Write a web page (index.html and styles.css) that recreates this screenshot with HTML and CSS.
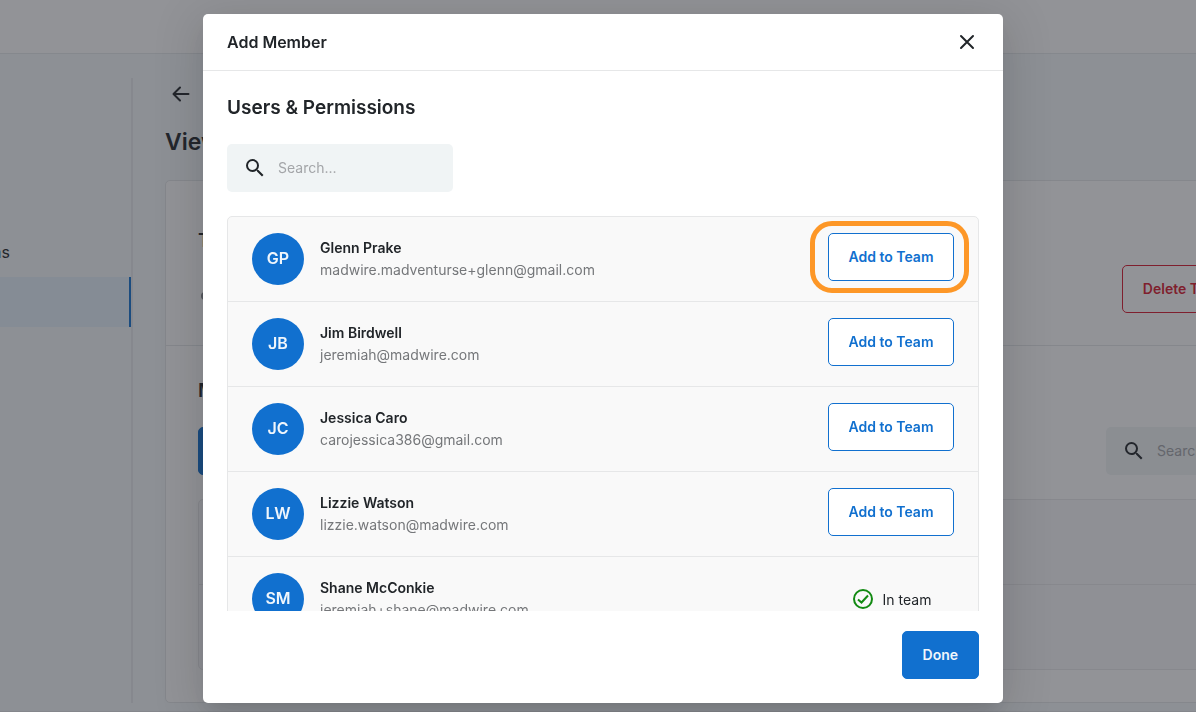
FILE: index.html
```html
<!DOCTYPE html>
<html lang="en">
<head>
    <meta charset="UTF-8">
    <meta name="viewport" content="width=device-width, initial-scale=1.0">
    <title>View Team - Add Member</title>
    <link rel="stylesheet" href="styles.css">
</head>
<body>
    <!-- Team page -->
    <div class="page" inert>
        <header class="topbar"></header>
        <div class="layout">
            <nav class="sidebar">
                <a class="nav-item" href="#">Permissions</a>
                <a class="nav-item active" href="#">Teams</a>
            </nav>
            <main class="content">
                <button class="icon-button back" aria-label="Back">
                    <svg class="icon" viewBox="0 0 24 24"><path class="line" d="M19.500 12H5M11 5.500L4.500 12l6.500 6.500"/></svg>
                </button>
                <h1>View Team</h1>
                <div class="card">
                    <section class="team-info">
                        <div>
                            <h2>Team</h2>
                            <svg class="icon team-icon" viewBox="0 0 24 24"><circle cx="7" cy="9" r="4"/><circle cx="17" cy="9" r="4"/></svg>
                        </div>
                        <button class="button danger">Delete Team</button>
                    </section>
                    <section class="members">
                        <h2>Members</h2>
                        <div class="toolbar">
                            <button class="button primary">Add Member</button>
                            <label class="search">
                                <svg class="icon" viewBox="0 0 24 24"><path d="M15.500 14h-.79l-.28-.27A6.470 6.470 0 0 0 16 9.500 6.500 6.500 0 1 0 9.500 16c1.610 0 3.090-.59 4.230-1.570l.27.28v.79l5 4.990L20.490 19l-4.990-5zm-6 0C7.010 14 5 11.990 5 9.500S7.010 5 9.500 5 14 7.010 14 9.500 11.990 14 9.500 14z"/></svg>
                                <input type="text" placeholder="Search..." aria-label="Search members">
                            </label>
                        </div>
                        <div class="member-rows">
                            <div class="member-row"></div>
                            <div class="member-row"></div>
                        </div>
                    </section>
                </div>
            </main>
        </div>
        <footer class="page-footer"></footer>
    </div>

    <!-- Add member dialog -->
    <div class="overlay">
        <div class="modal" role="dialog" aria-modal="true" aria-labelledby="modalTitle">
            <div class="modal-header">
                <h2 id="modalTitle">Add Member</h2>
                <button class="icon-button" aria-label="Close">
                    <svg class="icon" viewBox="0 0 24 24"><path class="line" d="M6 6l12 12M18 6L6 18"/></svg>
                </button>
            </div>
            <div class="modal-body">
                <h3>Users &amp; Permissions</h3>
                <label class="search">
                    <svg class="icon" viewBox="0 0 24 24"><path d="M15.500 14h-.79l-.28-.27A6.470 6.470 0 0 0 16 9.500 6.500 6.500 0 1 0 9.500 16c1.610 0 3.090-.59 4.230-1.570l.27.28v.79l5 4.990L20.490 19l-4.990-5zm-6 0C7.010 14 5 11.990 5 9.500S7.010 5 9.500 5 14 7.010 14 9.500 11.990 14 9.500 14z"/></svg>
                    <input type="text" placeholder="Search..." aria-label="Search users">
                </label>
                <ul class="user-list">
                    <li class="user">
                        <span class="avatar">GP</span>
                        <div class="user-text">
                            <div class="name">Glenn Prake</div>
                            <div class="email">madwire.madventurse+glenn@gmail.com</div>
                        </div>
                        <div class="action highlight"><button class="button outline">Add to Team</button></div>
                    </li>
                    <li class="user">
                        <span class="avatar">JB</span>
                        <div class="user-text">
                            <div class="name">Jim Birdwell</div>
                            <div class="email">jeremiah@madwire.com</div>
                        </div>
                        <div class="action"><button class="button outline">Add to Team</button></div>
                    </li>
                    <li class="user">
                        <span class="avatar">JC</span>
                        <div class="user-text">
                            <div class="name">Jessica Caro</div>
                            <div class="email">carojessica386@gmail.com</div>
                        </div>
                        <div class="action"><button class="button outline">Add to Team</button></div>
                    </li>
                    <li class="user">
                        <span class="avatar">LW</span>
                        <div class="user-text">
                            <div class="name">Lizzie Watson</div>
                            <div class="email">lizzie.watson@madwire.com</div>
                        </div>
                        <div class="action"><button class="button outline">Add to Team</button></div>
                    </li>
                    <li class="user">
                        <span class="avatar">SM</span>
                        <div class="user-text">
                            <div class="name">Shane McConkie</div>
                            <div class="email">jeremiah+shane@madwire.com</div>
                        </div>
                        <div class="in-team">
                            <svg class="icon check" viewBox="0 0 24 24"><circle cx="12" cy="12" r="9"/><path d="M7 12.500l3.500 3 6.500-7"/></svg>
                            In team
                        </div>
                    </li>
                </ul>
            </div>
            <div class="modal-footer">
                <button class="button primary">Done</button>
            </div>
        </div>
    </div>
</body>
</html>
```
FILE: styles.css
```css
* {
    box-sizing: border-box;
}
body {
    margin: 0;
    height: 100vh;
    overflow: hidden;
    font-family: Inter, sans-serif;
    font-size: 14px;
    color: #212529;
    background-color: #f4f8fa;
}
h1, h2, h3 {
    margin: 0;
    font-weight: 600;
}
h1 {
    font-size: 23px;
    line-height: 32px;
}
h2 {
    font-size: 19px;
    line-height: 24px;
}
h3 {
    font-size: 19px;
    line-height: 26px;
    margin-bottom: 23px;
}

/* Shared controls */
.icon {
    display: block;
    flex: none;
    width: 24px;
    height: 24px;
    fill: #212529;
}
.icon .line {
    fill: none;
    stroke: #212529;
    stroke-width: 2;
    stroke-linecap: round;
    stroke-linejoin: round;
}
.icon-button {
    padding: 0;
    background: none;
    border: none;
    cursor: pointer;
}
.button {
    height: 48px;
    padding: 0 20px 2px;
    font-family: inherit;
    font-size: 14px;
    font-weight: 600;
    white-space: nowrap;
    border: 1px solid #1170cf;
    border-radius: 5px;
    cursor: pointer;
}
.primary {
    color: #f0f6fc;
    background-color: #1170cf;
}
.outline {
    width: 100%;
    padding: 0 0 2px;
    color: #1170cf;
    background-color: white;
}
.danger {
    color: #d9162c;
    background: none;
    border-color: #d9162c;
}
.search {
    display: flex;
    align-items: center;
    gap: 11px;
    width: 226px;
    height: 48px;
    padding: 0 16px;
    background-color: #f0f4f5;
    border-radius: 5px;
}
.search input {
    flex: 1;
    min-width: 0;
    padding: 0 0 2px;
    font-family: inherit;
    font-size: 14px;
    background: none;
    border: none;
    outline: none;
}
.search input::placeholder {
    color: #a3a5a8;
}

/* Team page, wider than a small window */
.page {
    min-width: 1517px;
    margin-left: -120px;
}
.topbar {
    height: 54px;
    background-color: white;
    border-bottom: 1px solid #e4e8ea;
}
.layout {
    display: flex;
    padding: 24px 32px 8px 0;
}
.sidebar {
    width: 253px;
    padding-top: 149px;
    border-right: 2px solid #e6e8ec;
}
.nav-item {
    display: flex;
    align-items: center;
    height: 50px;
    padding-left: 38px;
    font-size: 16px;
    color: inherit;
    text-decoration: none;
}
.nav-item.active {
    background-color: #e4f0fb;
    border-right: 2px solid #1170cf;
}
.content {
    flex: 1;
    padding: 4px 0 0 32px;
}
.back {
    display: block;
    margin: 0 0 20px 4px;
}
.card {
    margin-top: 22px;
    background-color: white;
    border: 1px solid #e4e7e9;
    border-radius: 5px;
}
.team-info {
    display: flex;
    align-items: flex-start;
    justify-content: space-between;
    height: 165px;
    padding: 48px 116px 0 32px;
    border-bottom: 1px solid #e4e7e9;
}
.team-icon {
    margin-top: 34px;
    fill: #85888b;
}
.team-info .button {
    margin-top: 36px;
}
.members {
    padding: 33px 32px 32px;
}
.toolbar {
    display: flex;
    justify-content: space-between;
    margin: 24px 0;
}
.member-rows {
    background-color: #f8f8fa;
    border: 1px solid #e8e8ea;
    border-radius: 5px;
}
.member-row {
    height: 84px;
}
.member-row + .member-row {
    height: 85px;
    border-top: 1px solid #e8e8ea;
}
.page-footer {
    height: 48px;
    border-top: 1px solid #e4e7e9;
}

/* Dialog */
.overlay {
    position: fixed;
    inset: 0;
    display: flex;
    justify-content: center;
    padding: 14px 16px 9px;
    background-color: rgba(37, 40, 47, 0.5);
}
.modal {
    display: flex;
    flex-direction: column;
    width: 100%;
    max-width: 800px;
    margin-left: 10px;
    background-color: white;
    border-radius: 5px;
    box-shadow: 0 11px 15px -7px rgba(0,0,0,0.1), 0 9px 46px 8px rgba(0,0,0,0.12);
}
.modal-header {
    display: flex;
    align-items: center;
    justify-content: space-between;
    height: 57px;
    padding: 0 24px;
    border-bottom: 1px solid #e6e7e8;
}
.modal-header h2 {
    font-size: 16px;
}
.modal-body {
    flex: 1;
    min-height: 0;
    padding: 24px 24px 0;
    overflow-y: auto;
    scrollbar-width: none;
}
.modal-footer {
    display: flex;
    justify-content: flex-end;
    padding: 20px 24px 24px;
}
.user-list {
    margin: 24px 0 0;
    padding: 0;
    list-style: none;
    background-color: #f9f9f9;
    border: 1px solid #e6e7e8;
    border-radius: 5px;
}
.user {
    display: flex;
    align-items: center;
    gap: 16px;
    padding: 16px 24px;
}
.user + .user {
    border-top: 1px solid #e6e7e8;
}
.avatar {
    display: flex;
    align-items: center;
    justify-content: center;
    width: 52px;
    height: 52px;
    padding-bottom: 2px;
    font-size: 16px;
    font-weight: 600;
    color: #f0f6fc;
    background-color: #1170cf;
    border-radius: 50%;
}
.user-text {
    flex: 1;
    line-height: 22px;
}
.name {
    font-weight: 600;
}
.email {
    color: #75777a;
}
.action {
    align-self: flex-start;
    width: 126px;
}
/* Ring drawn around the button */
.highlight {
    position: relative;
}
.highlight::after {
    content: "";
    position: absolute;
    inset: -12px -15px -12px -18px;
    border: 5px solid #fd9727;
    border-radius: 22px;
    pointer-events: none;
}
.in-team {
    display: flex;
    align-items: center;
    justify-content: center;
    gap: 8px;
    width: 126px;
}
.check {
    fill: none;
    stroke: #128a12;
    stroke-width: 2;
}
```
